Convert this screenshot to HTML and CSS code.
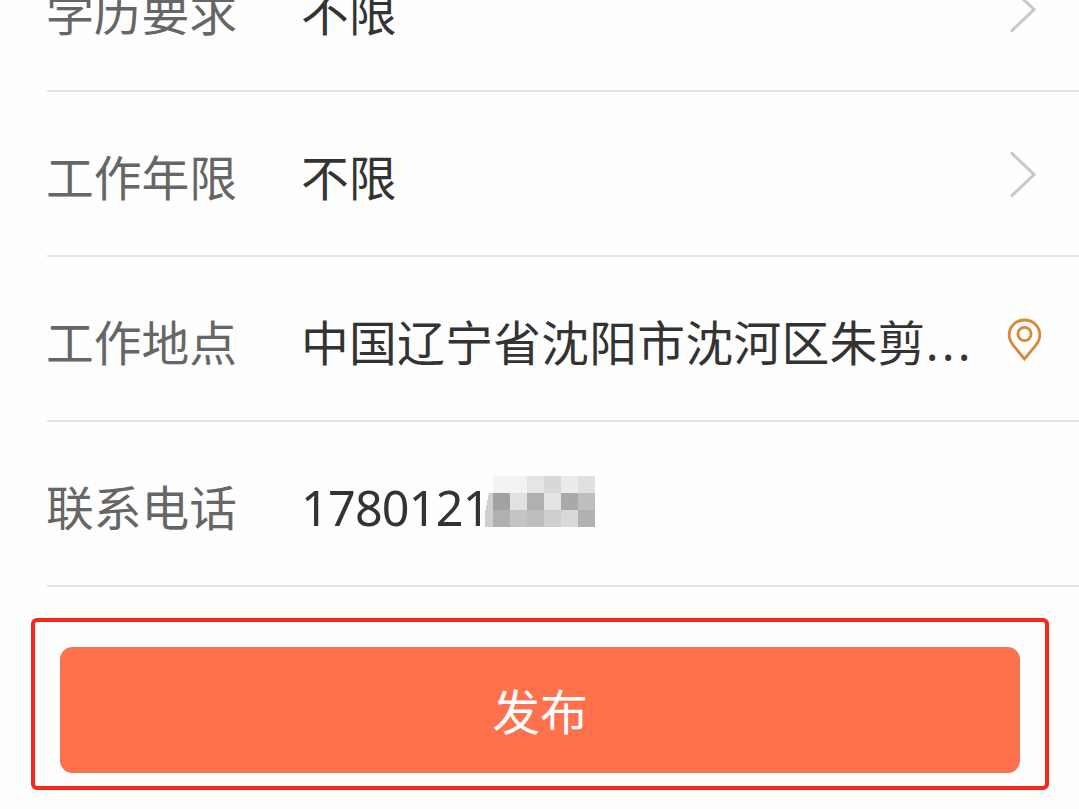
FILE: index.html
```html
<!DOCTYPE html>
<html lang="zh-CN">
<head>
    <meta charset="UTF-8">
    <meta name="viewport" content="width=device-width, initial-scale=1.0">
    <title>发布</title>
    <link rel="stylesheet" href="styles.css">
</head>
<body>
    <div class="form">
        <div class="row">
            <span class="label">学历要求</span>
            <span class="value">不限</span>
            <svg class="arrow" viewBox="0 0 28 48"><path d="M3 2.5 L26 24.5 L3 46.5"/></svg>
        </div>
        <div class="row">
            <span class="label">工作年限</span>
            <span class="value">不限</span>
            <svg class="arrow" viewBox="0 0 28 48"><path d="M3 2.5 L26 24.5 L3 46.5"/></svg>
        </div>
        <div class="row">
            <span class="label">工作地点</span>
            <span class="value address">中国辽宁省沈阳市沈河区朱剪<span class="dots">...</span></span>
            <svg class="pin" viewBox="0 0 36 44">
                <path d="M18.5 3 C9.5 3 3.2 9.7 3.2 18 C3.2 22 5 25.5 7.5 28.7 L18.5 42 L29.5 28.7 C32 25.5 33.8 22 33.8 18 C33.8 9.7 27.5 3 18.5 3 Z"/>
                <circle cx="18.5" cy="17" r="6.6"/>
            </svg>
        </div>
        <div class="row">
            <span class="label">联系电话</span>
            <span class="value phone">1780121</span>
            <svg class="mosaic" viewBox="0 0 110 51" shape-rendering="crispEdges">
                <path d="M4 17 H8 V51 H0 V36 Z" fill="#cfcfcf"/>
                <rect x="8" y="0" width="34" height="17" fill="#f3f3f3"/>
                <rect x="42" y="0" width="17" height="17" fill="#e5e5e5"/>
                <rect x="59" y="0" width="17" height="17" fill="#d8d8d8"/>
                <rect x="76" y="0" width="17" height="17" fill="#ebebeb"/>
                <rect x="93" y="0" width="17" height="17" fill="#e0e0e0"/>
                <rect x="8" y="17" width="17" height="17" fill="#a2a2a2"/>
                <rect x="25" y="17" width="17" height="17" fill="#e1e1e1"/>
                <rect x="42" y="17" width="17" height="17" fill="#b0b0b0"/>
                <rect x="59" y="17" width="17" height="17" fill="#e4e4e4"/>
                <rect x="76" y="17" width="17" height="17" fill="#a9a9a9"/>
                <rect x="93" y="17" width="17" height="17" fill="#bebebe"/>
                <rect x="8" y="34" width="17" height="17" fill="#b0b0b0"/>
                <rect x="25" y="34" width="17" height="17" fill="#c4c4c4"/>
                <rect x="42" y="34" width="17" height="17" fill="#bdbdbd"/>
                <rect x="59" y="34" width="17" height="17" fill="#cecece"/>
                <rect x="76" y="34" width="17" height="17" fill="#d9d9d9"/>
                <rect x="93" y="34" width="17" height="17" fill="#b1b1b1"/>
            </svg>
        </div>
    </div>
    <div class="frame">
        <button class="publish">发布</button>
    </div>
</body>
</html>
```

FILE: styles.css
```css
body {
    margin: 0;
    height: 809px;
    overflow: hidden;
    background: #fefefe;
    font-family: "Noto Sans CJK SC", sans-serif;
}
.form {
    margin-top: -73px;
    padding-left: 47px;
}
.row {
    display: flex;
    align-items: center;
    box-sizing: border-box;
    height: 165px;
    border-bottom: 2px solid #e4e4e4;
    font-size: 47.75px;
}
.label {
    width: 255px;
    margin-left: -1px;
    padding-top: 3px;
    color: #666;
}
.value {
    flex: 1;
    padding-top: 3px;
    color: #333;
    white-space: nowrap;
}
.address {
    letter-spacing: 0.3px;
}
.dots {
    font-family: "Noto Sans", sans-serif;
    letter-spacing: 3.2px;
}
.phone {
    flex: none;
    width: 184px;
    padding-top: 6px;
    font-family: "Noto Sans", sans-serif;
    font-size: 48.5px;
    letter-spacing: -0.8px;
}
.arrow {
    width: 28px;
    height: 48px;
    margin-right: 43px;
    fill: none;
    stroke: #c8c8c8;
    stroke-width: 3;
}
.pin {
    width: 36px;
    height: 44px;
    margin-right: 37px;
    fill: none;
    stroke: #d98a35;
    stroke-width: 2.8;
}
.mosaic {
    width: 110px;
    height: 51px;
    margin-bottom: 5px;
}
.frame {
    box-sizing: border-box;
    width: 1018px;
    height: 172px;
    margin: 31px 0 0 31px;
    padding: 25px;
    border: 4px solid #f9261b;
    border-radius: 6px;
}
.publish {
    display: block;
    width: 960px;
    height: 126px;
    padding: 0 0 2px;
    border: 1px solid #e87757;
    border-radius: 12px;
    background: #ff714d;
    color: #fff;
    font-family: inherit;
    font-size: 47.75px;
}
```
